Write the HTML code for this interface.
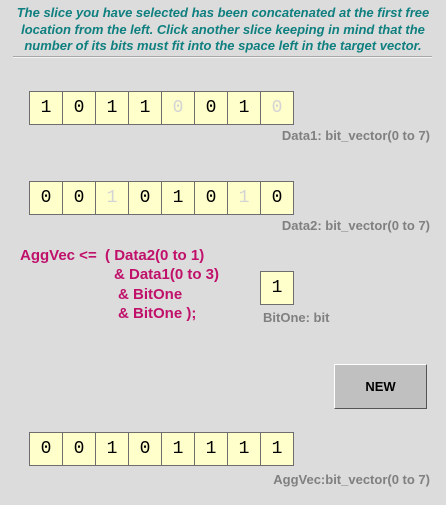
<!DOCTYPE html>
<html><head><style>
body{margin:0;width:446px;height:505px;background:#dcdcdc;position:relative;overflow:hidden;font-family:"Liberation Sans",Arial,sans-serif}
.hdr{position:absolute;left:0;top:5px;width:446px;text-align:center;color:#0f7f7f;font-weight:bold;font-style:italic;font-size:13px;line-height:16.5px}
.sep{position:absolute;left:13px;top:56px;width:419px;height:0;border-top:1px solid #a8a8a8;border-bottom:1px solid #f4f4f4}
.row{position:absolute;left:29px;display:flex}
.c{width:32px;height:32px;border:1px solid #6e6e6e;margin-right:-1px;background:#ffffcc;font-family:"Liberation Mono",monospace;font-size:18px;line-height:32px;text-align:center;color:#000}
.c.f{color:#d4d4d4}
.lbl{position:absolute;color:#808080;font-weight:bold;font-size:13px;right:16px}
.code{position:absolute;color:#c0106a;font-weight:bold;font-size:15px;line-height:19.5px;white-space:pre}
.btn{position:absolute;left:334px;top:364px;width:91px;height:43px;background:#c0c0c0;border:1px solid;border-color:#fff #555 #555 #fff;text-align:center;line-height:43px;font-weight:bold;font-size:13px;color:#000}
</style></head><body>
<div class="hdr">The slice you have selected has been concatenated at the first free<br>location from the left. Click another slice keeping in mind that the<br>number of its bits must fit into the space left in the target vector.</div>
<div class="sep"></div>
<div class="row" style="top:91px"><div class="c">1</div><div class="c">0</div><div class="c">1</div><div class="c">1</div><div class="c f">0</div><div class="c">0</div><div class="c">1</div><div class="c f">0</div></div>
<div class="lbl" style="top:128px">Data1: bit_vector(0 to 7)</div>
<div class="row" style="top:181px"><div class="c">0</div><div class="c">0</div><div class="c f">1</div><div class="c">0</div><div class="c">1</div><div class="c">0</div><div class="c f">1</div><div class="c">0</div></div>
<div class="lbl" style="top:218px">Data2: bit_vector(0 to 7)</div>
<div class="code" style="left:20px;top:246px">AggVec &lt;=  ( Data2(0 to 1)</div>
<div class="code" style="left:114px;top:265px">&amp; Data1(0 to 3)</div>
<div class="code" style="left:118px;top:285px">&amp; BitOne</div>
<div class="code" style="left:118px;top:304px">&amp; BitOne );</div>
<div class="row" style="left:260px;top:271px"><div class="c">1</div></div>
<div class="lbl" style="left:263px;right:auto;top:310px">BitOne: bit</div>
<div class="btn">NEW</div>
<div class="row" style="top:432px"><div class="c">0</div><div class="c">0</div><div class="c">1</div><div class="c">0</div><div class="c">1</div><div class="c">1</div><div class="c">1</div><div class="c">1</div></div>
<div class="lbl" style="top:472px">AggVec:bit_vector(0 to 7)</div>
</body></html>
